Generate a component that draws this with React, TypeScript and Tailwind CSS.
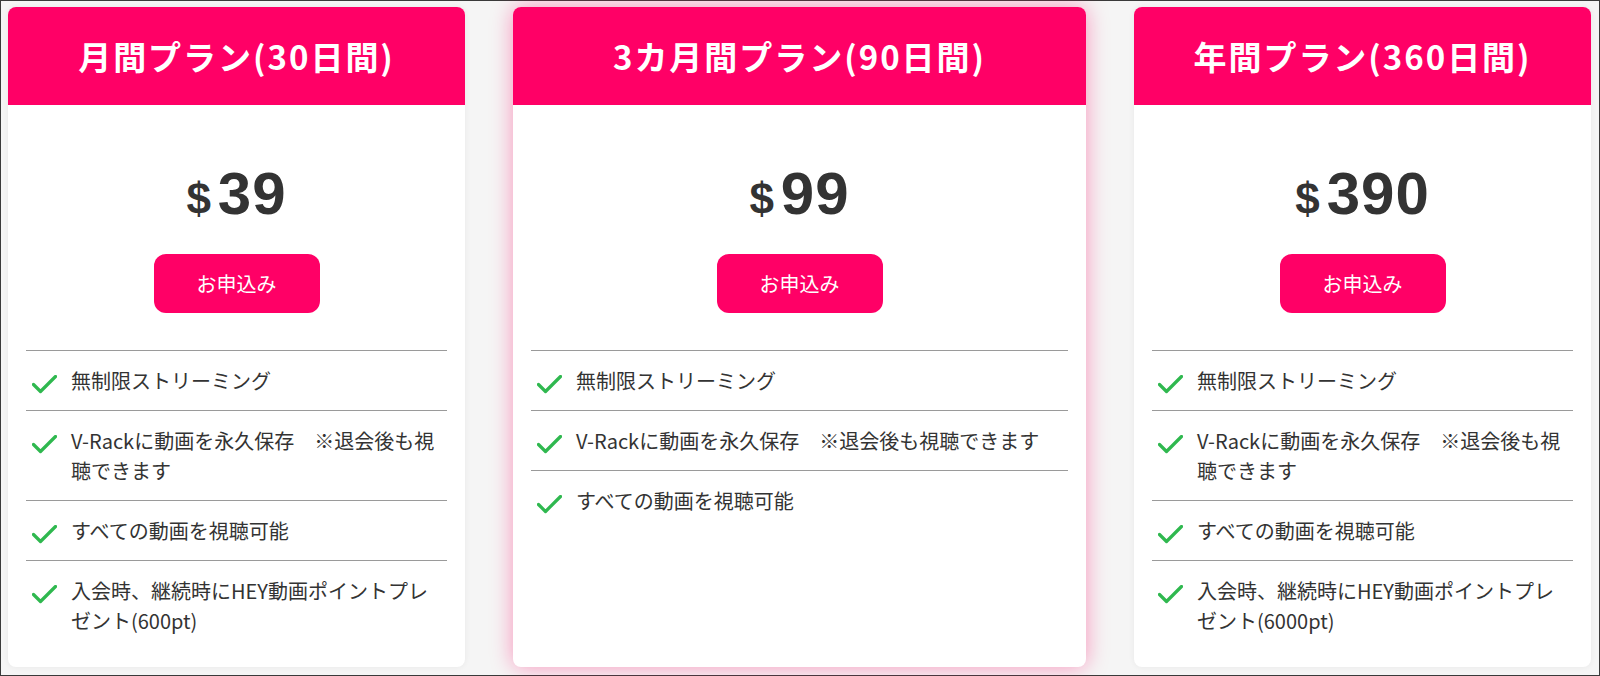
import React from 'react';

interface Plan {
  title: string;
  price: string;
  features: string[];
  featured?: boolean;
  width: string;
}

const plans: Plan[] = [
  {
    title: '月間プラン(30日間)',
    price: '39',
    width: 'w-[457px]',
    features: [
      '無制限ストリーミング',
      'V-Rackに動画を永久保存　※退会後も視聴できます',
      'すべての動画を視聴可能',
      '入会時、継続時にHEY動画ポイントプレゼント(600pt)',
    ],
  },
  {
    title: '3カ月間プラン(90日間)',
    price: '99',
    width: 'w-[573px]',
    featured: true,
    features: [
      '無制限ストリーミング',
      'V-Rackに動画を永久保存　※退会後も視聴できます',
      'すべての動画を視聴可能',
    ],
  },
  {
    title: '年間プラン(360日間)',
    price: '390',
    width: 'w-[457px]',
    features: [
      '無制限ストリーミング',
      'V-Rackに動画を永久保存　※退会後も視聴できます',
      'すべての動画を視聴可能',
      '入会時、継続時にHEY動画ポイントプレゼント(6000pt)',
    ],
  },
];

const CheckMark = () => (
  <svg width="25" height="19" viewBox="0 0 25 19" className="shrink-0 mt-[9px] ml-[6px]">
    <path d="M1.5 9.5 L8.5 16.5 L23.5 1.5" fill="none" stroke="#2fb84f" strokeWidth="3.2" strokeLinecap="round" strokeLinejoin="round" />
  </svg>
);

const PlanCard: React.FC<{ plan: Plan }> = ({ plan }) => (
  <div
    className={`${plan.width} bg-white rounded-[8px] overflow-hidden flex flex-col ${
      plan.featured ? 'shadow-[0_0_22px_rgba(255,0,102,0.4)]' : 'shadow-[0_0_6px_rgba(0,0,0,0.06)]'
    }`}
  >
    <div className="h-[98px] bg-[#ff0066] flex items-center justify-center">
      <h2 className="text-white font-bold text-[33px] tracking-[0.06em] leading-none">{plan.title}</h2>
    </div>

    <div className="flex flex-col items-center px-[18px] pb-[17px]">
      {/* 価格 */}
      <div className="mt-[59px] h-[60px] flex items-baseline justify-center font-['Liberation_Sans',Arial,sans-serif] font-bold text-[#333]">
        <span className="text-[44px] mr-[7px] leading-none">$</span>
        <span className="text-[60px] tracking-[1px] leading-none">{plan.price}</span>
      </div>

      <button className="mt-[30px] w-[166px] h-[59px] rounded-[12px] bg-[#ff0066] text-white text-[20px]">
        お申込み
      </button>

      <ul className="mt-[37px] w-full">
        {plan.features.map((f) => (
          <li key={f} className="flex items-start gap-[14px] border-t border-[#9a9a9a] pt-[15px] pb-[14px]">
            <CheckMark />
            <span className="text-[20px] leading-[30px] text-[#333]">{f}</span>
          </li>
        ))}
      </ul>
    </div>
  </div>
);

export default function App() {
  return (
    <div className="w-[1600px] h-[676px] border border-[#3a3a3a] bg-[#f5f5f5] flex items-stretch gap-[48px] pl-[7px] pt-[6px] pb-[8px] font-['Noto_Sans_CJK_JP','Noto_Sans',sans-serif]">
      {plans.map((p) => (
        <PlanCard key={p.title} plan={p} />
      ))}
    </div>
  );
}
